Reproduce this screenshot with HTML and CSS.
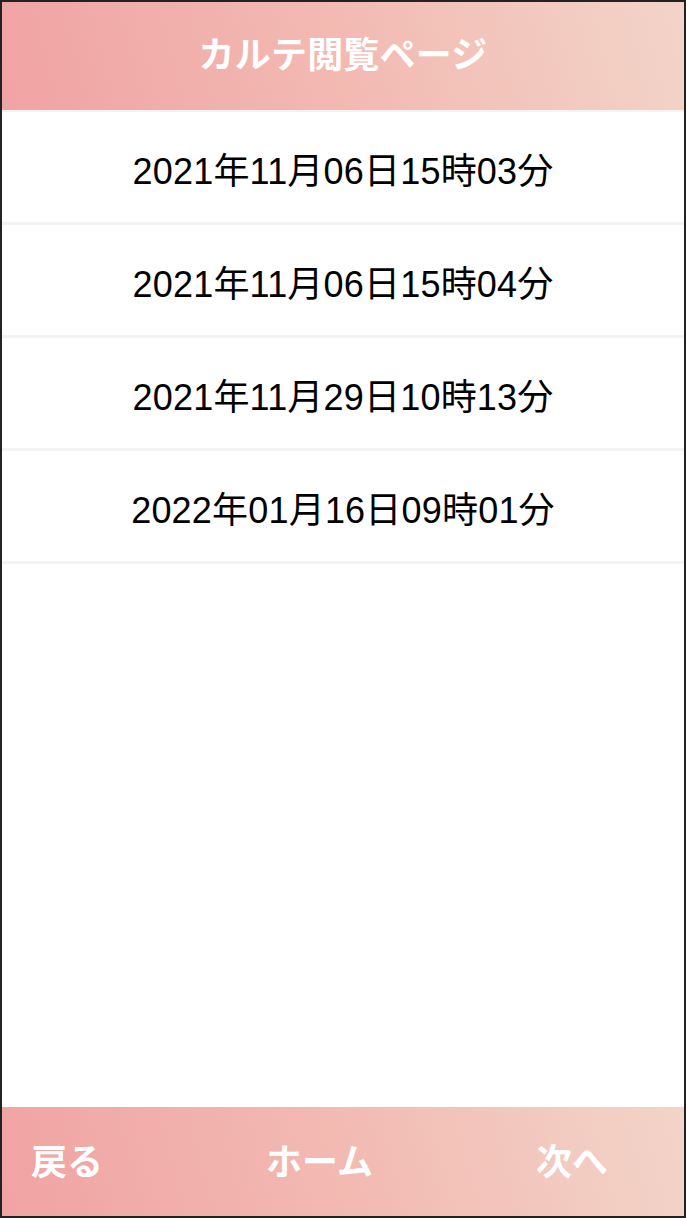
FILE: index.html
```html
<!DOCTYPE html>
<html lang="ja">
<head>
<meta charset="utf-8">
<title>カルテ閲覧ページ</title>
<link rel="stylesheet" href="styles.css">
</head>
<body>
<div class="frame">
  <header class="topbar">
    <h1 class="title">カルテ閲覧ページ</h1>
  </header>
  <ul class="list">
    <li class="item">2021年11月06日15時03分</li>
    <li class="item">2021年11月06日15時04分</li>
    <li class="item">2021年11月29日10時13分</li>
    <li class="item">2022年01月16日09時01分</li>
  </ul>
  <footer class="bottombar">
    <span class="nav">戻る</span>
    <span class="nav">ホーム</span>
    <span class="nav">次へ</span>
  </footer>
</div>
</body>
</html>
```
FILE: styles.css
```css
html, body {
  margin: 0;
  padding: 0;
  background: #222;
}
.frame {
  box-sizing: border-box;
  width: 686px;
  height: 1218px;
  border: 2px solid #222;
  background: #fff;
  display: flex;
  flex-direction: column;
}
.topbar {
  height: 108px;
  border-bottom: 2px solid #f3f3f3;
  background: linear-gradient(75deg, #f0a3a3 0%, #f2bab2 50%, #f3d4c8 100%);
  display: flex;
  align-items: center;
  justify-content: center;
}
.title {
  margin: 0;
  padding-bottom: 8px;
  color: #fff;
  font-family: "Noto Sans CJK JP", sans-serif;
  font-weight: 700;
  font-size: 36px;
  letter-spacing: 0.2px;
}
.list {
  list-style: none;
  margin: 0;
  padding: 0;
  flex: 1;
}
.item {
  box-sizing: border-box;
  height: 113px;
  border-bottom: 3px solid #f3f3f3;
  display: flex;
  align-items: center;
  justify-content: center;
  padding-top: 2px;
  font-family: "Liberation Sans", "Noto Sans CJK JP", sans-serif;
  font-size: 36px;
  letter-spacing: 0.2px;
  color: #000;
}
.bottombar {
  box-sizing: border-box;
  height: 109px;
  background: linear-gradient(75deg, #f0a3a3 0%, #f2bab2 50%, #f3d4c8 100%);
  display: flex;
  align-items: center;
  justify-content: space-between;
  padding: 0 76px 6px 29px;
}
.nav {
  color: #fff;
  font-family: "Noto Sans CJK JP", sans-serif;
  font-weight: 700;
  font-size: 36px;
}
```
